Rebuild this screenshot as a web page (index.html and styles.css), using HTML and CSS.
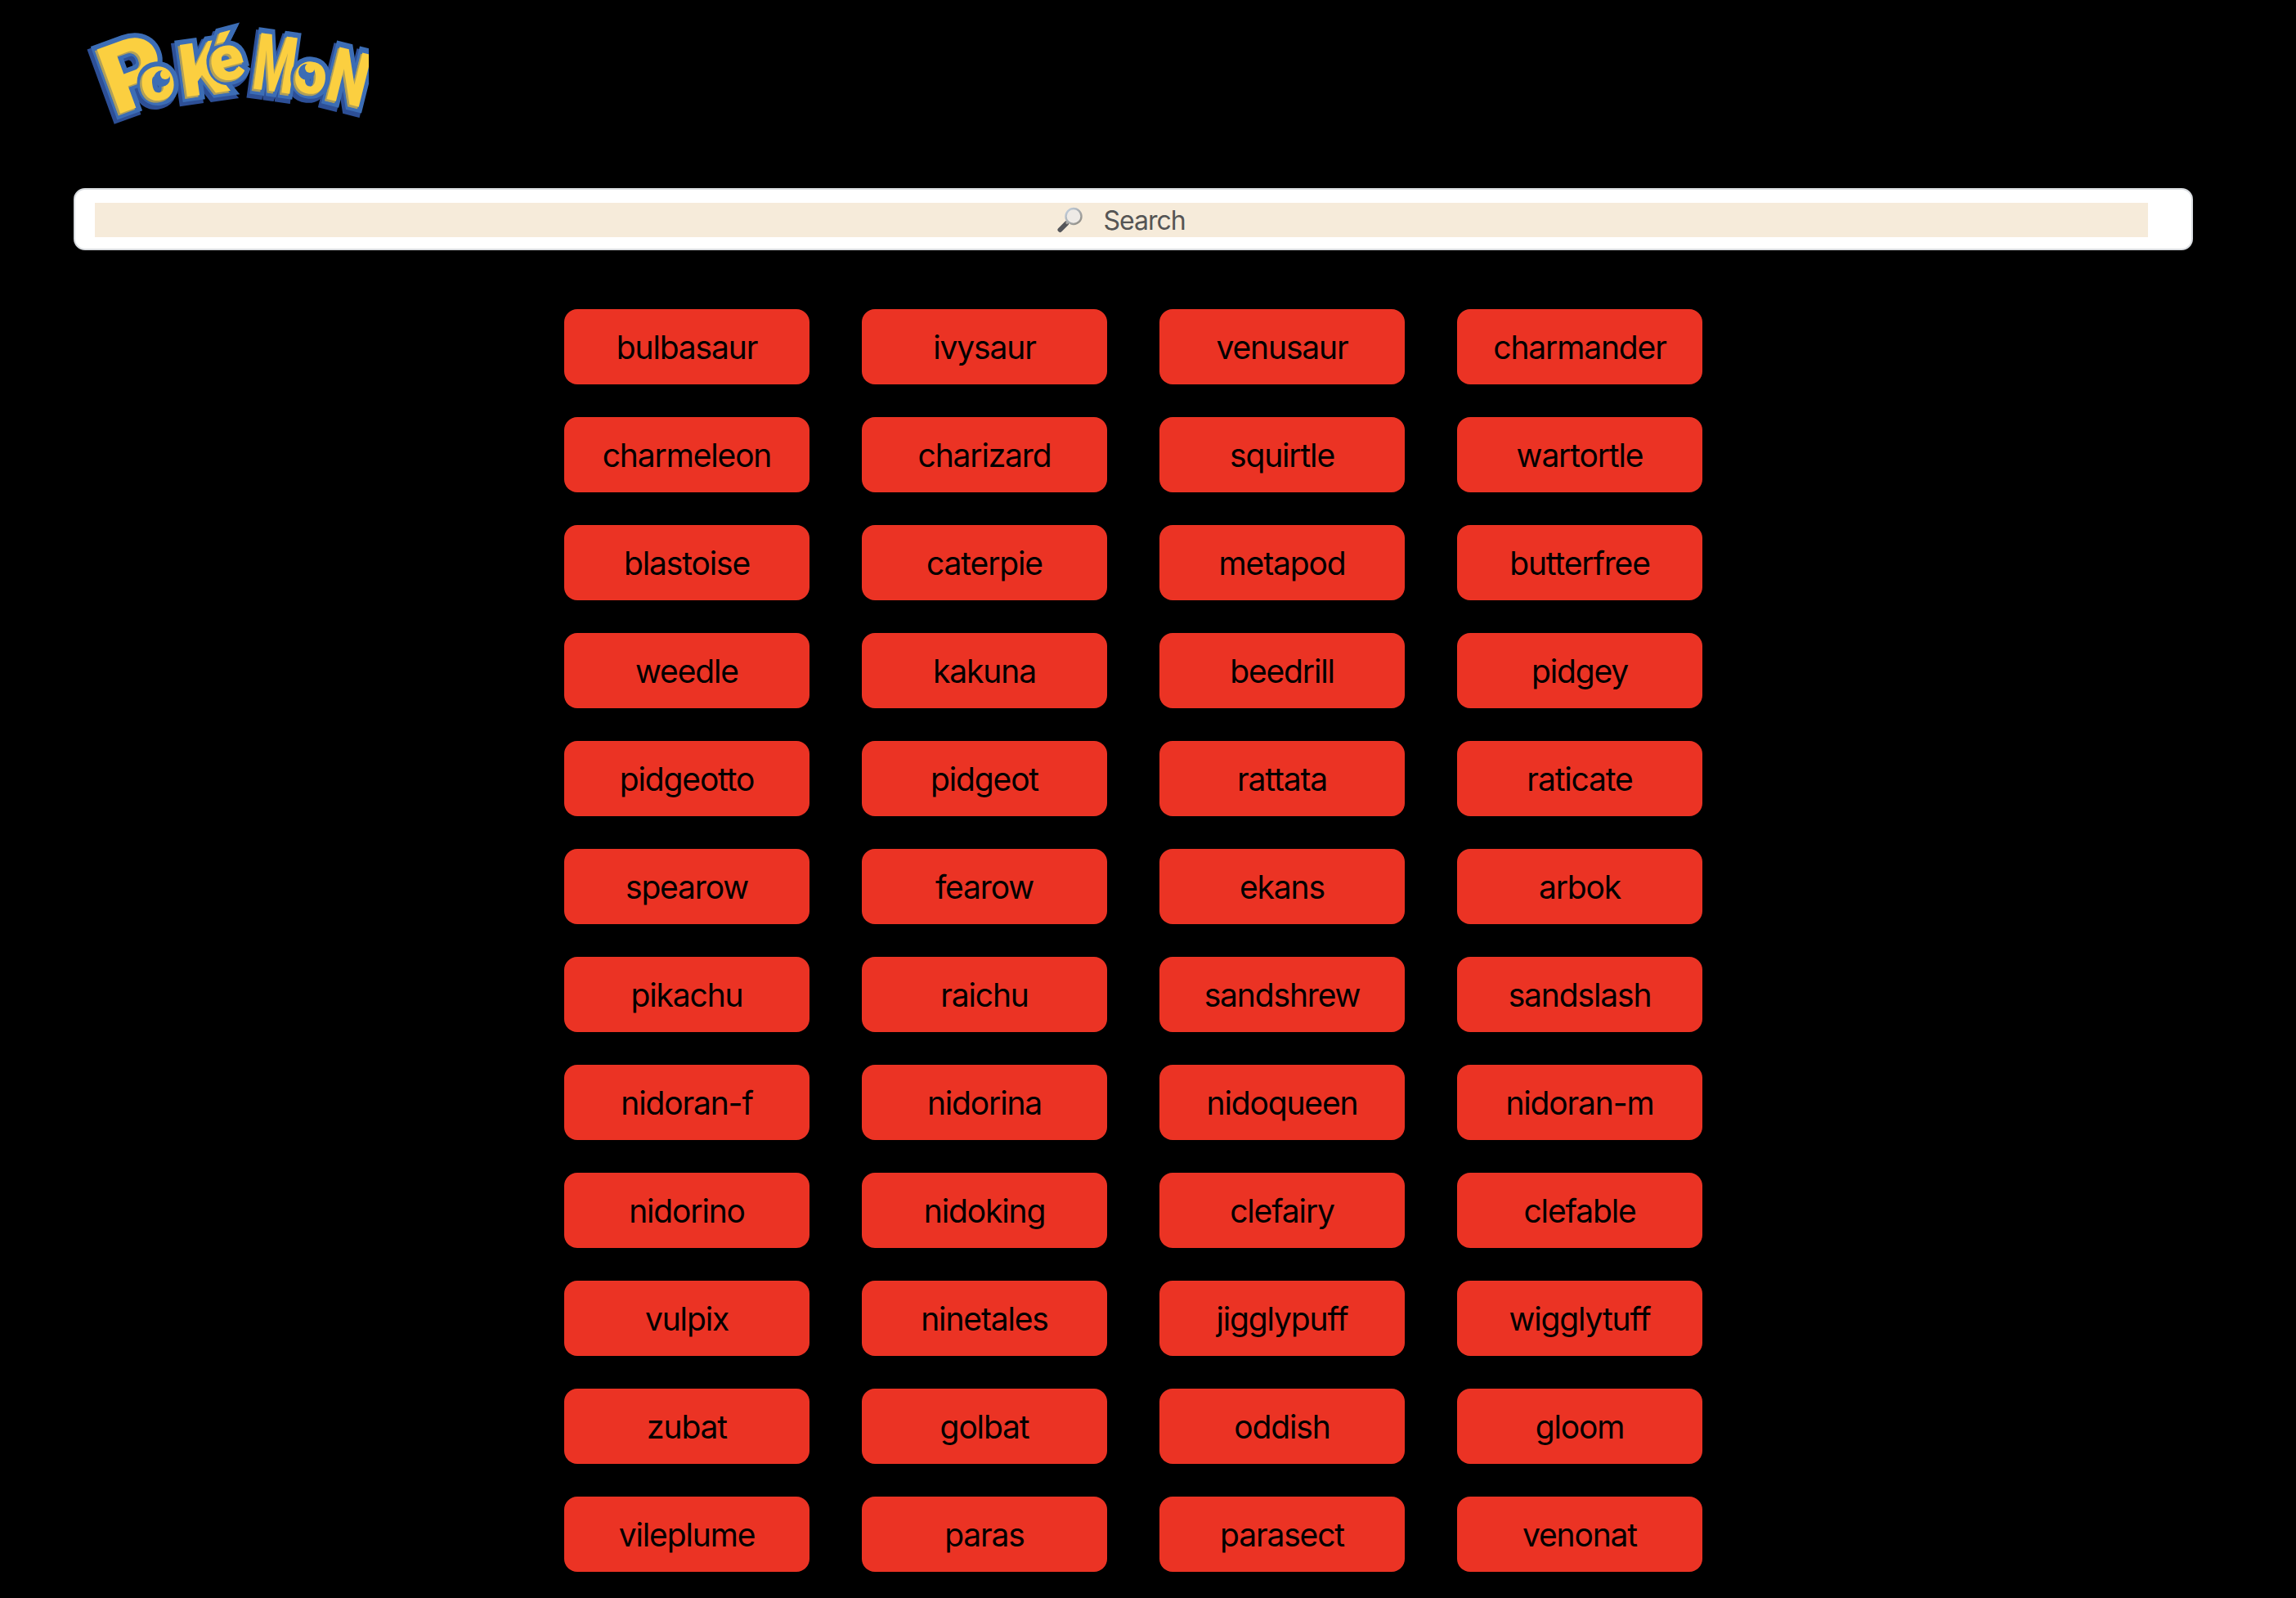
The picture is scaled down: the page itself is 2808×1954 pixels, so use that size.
FILE: index.html
```html
<!DOCTYPE html>
<html>
<head>
  <meta charset="UTF-8">
  <title>Pokemon</title>
  <link rel="stylesheet" href="styles.css">
</head>
<body>

  <header class="header">
    <svg class="logo" viewBox="0 0 360 140" role="img" aria-label="Pokémon">
      <defs>
        <g id="logoLetters">
          <text id="letterP" transform="translate(50 125) rotate(-20) scale(1.02 1)" font-size="117">P</text>
          <text id="letterO1" transform="translate(105 106) rotate(-8)" text-anchor="middle" font-size="76">o</text>
          <text id="letterK" transform="translate(133 103) rotate(-8)" font-size="90">K</text>
          <text id="letterE" transform="translate(192 81) rotate(-15)" text-anchor="middle" font-size="78">é</text>
          <text id="letterM" transform="translate(216 92) rotate(8) scale(0.66 1.1)" font-size="88">M</text>
          <text id="letterO2" transform="translate(287 98) rotate(5)" text-anchor="middle" font-size="72">o</text>
          <text id="letterN" transform="translate(305 104) rotate(14) scale(0.85 1.15)" font-size="80">N</text>
        </g>
      </defs>
      <use href="#logoLetters" class="logo-shadow" x="-3" y="4"></use>

      <use href="#letterP" class="logo-outline"></use>
      <use href="#letterP" class="logo-shade" x="-2" y="2"></use>
      <use href="#letterP" class="logo-fill"></use>

      <use href="#letterK" class="logo-outline"></use>
      <use href="#letterK" class="logo-shade" x="-2" y="2"></use>
      <use href="#letterK" class="logo-fill"></use>

      <use href="#letterO1" class="logo-outline"></use>
      <use href="#letterO1" class="logo-shade" x="-2" y="2"></use>
      <use href="#letterO1" class="logo-fill"></use>

      <use href="#letterM" class="logo-outline"></use>
      <use href="#letterM" class="logo-shade" x="-2" y="2"></use>
      <use href="#letterM" class="logo-fill"></use>

      <use href="#letterN" class="logo-outline"></use>
      <use href="#letterN" class="logo-shade" x="-2" y="2"></use>
      <use href="#letterN" class="logo-fill"></use>

      <use href="#letterE" class="logo-outline"></use>
      <use href="#letterE" class="logo-shade" x="-2" y="2"></use>
      <use href="#letterE" class="logo-fill"></use>

      <use href="#letterO2" class="logo-outline"></use>
      <use href="#letterO2" class="logo-shade" x="-2" y="2"></use>
      <use href="#letterO2" class="logo-fill"></use>

      <circle class="logo-eye" cx="107" cy="80" r="10"></circle>
      <circle class="logo-fill" cx="111" cy="75" r="6"></circle>
      <circle class="logo-eye" cx="284" cy="72" r="10"></circle>
      <circle class="logo-fill" cx="288" cy="67" r="6"></circle>
    </svg>
  </header>

  <main class="page">
    <div class="search-box">
      <div class="search-field">
        <svg class="search-icon" viewBox="0 0 32 32">
          <defs>
            <linearGradient id="lensRim" x1="0" y1="0" x2="1" y2="1">
              <stop offset="0" stop-color="#c4d2e2"></stop>
              <stop offset="1" stop-color="#8f8a80"></stop>
            </linearGradient>
          </defs>
          <line x1="3.5" y1="28" x2="11" y2="20.5" stroke="#55565a" stroke-width="6" stroke-linecap="round"></line>
          <line x1="11" y1="20.5" x2="14" y2="17.5" stroke="#a9a7a2" stroke-width="3"></line>
          <circle cx="20" cy="11.5" r="9.5" fill="#eeeae6" stroke="url(#lensRim)" stroke-width="2.4"></circle>
        </svg>
        <span>Search</span>
      </div>
    </div>

    <div class="pokemon-grid">
      <div class="pokemon-btn">bulbasaur</div>
      <div class="pokemon-btn">ivysaur</div>
      <div class="pokemon-btn">venusaur</div>
      <div class="pokemon-btn">charmander</div>
      <div class="pokemon-btn">charmeleon</div>
      <div class="pokemon-btn">charizard</div>
      <div class="pokemon-btn">squirtle</div>
      <div class="pokemon-btn">wartortle</div>
      <div class="pokemon-btn">blastoise</div>
      <div class="pokemon-btn">caterpie</div>
      <div class="pokemon-btn">metapod</div>
      <div class="pokemon-btn">butterfree</div>
      <div class="pokemon-btn">weedle</div>
      <div class="pokemon-btn">kakuna</div>
      <div class="pokemon-btn">beedrill</div>
      <div class="pokemon-btn">pidgey</div>
      <div class="pokemon-btn">pidgeotto</div>
      <div class="pokemon-btn">pidgeot</div>
      <div class="pokemon-btn">rattata</div>
      <div class="pokemon-btn">raticate</div>
      <div class="pokemon-btn">spearow</div>
      <div class="pokemon-btn">fearow</div>
      <div class="pokemon-btn">ekans</div>
      <div class="pokemon-btn">arbok</div>
      <div class="pokemon-btn">pikachu</div>
      <div class="pokemon-btn">raichu</div>
      <div class="pokemon-btn">sandshrew</div>
      <div class="pokemon-btn">sandslash</div>
      <div class="pokemon-btn">nidoran-f</div>
      <div class="pokemon-btn">nidorina</div>
      <div class="pokemon-btn">nidoqueen</div>
      <div class="pokemon-btn">nidoran-m</div>
      <div class="pokemon-btn">nidorino</div>
      <div class="pokemon-btn">nidoking</div>
      <div class="pokemon-btn">clefairy</div>
      <div class="pokemon-btn">clefable</div>
      <div class="pokemon-btn">vulpix</div>
      <div class="pokemon-btn">ninetales</div>
      <div class="pokemon-btn">jigglypuff</div>
      <div class="pokemon-btn">wigglytuff</div>
      <div class="pokemon-btn">zubat</div>
      <div class="pokemon-btn">golbat</div>
      <div class="pokemon-btn">oddish</div>
      <div class="pokemon-btn">gloom</div>
      <div class="pokemon-btn">vileplume</div>
      <div class="pokemon-btn">paras</div>
      <div class="pokemon-btn">parasect</div>
      <div class="pokemon-btn">venonat</div>
    </div>
  </main>

</body>
</html>
```

FILE: styles.css
```css
body {
  margin: 0;
  background-color: #000;
  color: #000;
  font-family: Inter, "Liberation Sans", sans-serif;
}
.header {
  height: 230px;
  padding-left: 91px;
  padding-top: 16px;
  box-sizing: border-box;
}
.logo {
  display: block;
  width: 360px;
  height: 140px;
}
.logo text {
  font-family: Roboto, sans-serif;
  font-weight: 900;
}
.logo-shadow {
  fill: #2d4f96;
  stroke: #2d4f96;
  stroke-width: 14px;
  stroke-linejoin: miter;
}
.logo-outline {
  fill: #3c6db5;
  stroke: #3c6db5;
  stroke-width: 12px;
  stroke-linejoin: miter;
}
.logo-shade {
  fill: #b1a059;
  stroke: #b1a059;
  stroke-width: 1px;
}
.logo-fill {
  fill: #fbcf40;
}
.logo-eye {
  fill: #3c6db5;
}
.page {
  margin-left: 90px;
  width: 2592px;
}
.search-box {
  box-sizing: border-box;
  height: 76px;
  padding: 16px 53px 14px 24px;
  background-color: #fff;
  border: 2px solid #d9dce0;
  border-radius: 14px;
}
.search-field {
  display: flex;
  align-items: center;
  justify-content: center;
  gap: 24px;
  height: 42px;
  background-color: #f6ebda;
  color: #555;
  font-size: 32px;
  letter-spacing: -1px;
}
.search-icon {
  width: 32px;
  height: 32px;
}
.pokemon-grid {
  display: grid;
  grid-template-columns: repeat(4, 300px);
  gap: 40px 64px;
  justify-content: center;
  margin-top: 72px;
}
.pokemon-btn {
  display: flex;
  align-items: center;
  justify-content: center;
  height: 92px;
  background-color: #eb3324;
  border-radius: 16px;
  font-size: 39px;
  letter-spacing: -1.15px;
}
```
